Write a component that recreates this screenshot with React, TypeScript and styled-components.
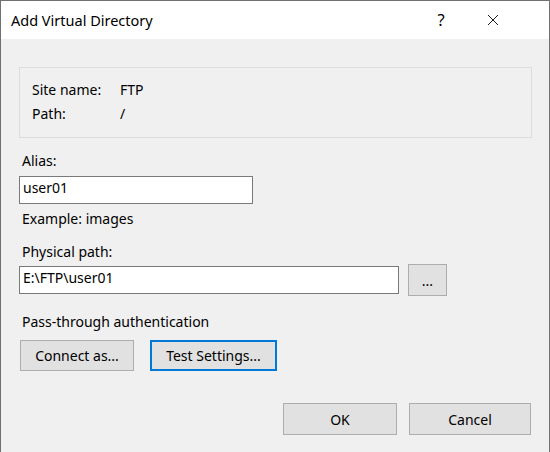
import React from 'react';
import styled, { createGlobalStyle } from 'styled-components';

const GlobalStyle = createGlobalStyle`
  html, body {
    margin: 0;
    padding: 0;
    background: #ffffff;
  }
  body {
    font-family: 'Noto Sans', 'Open Sans', sans-serif;
    font-size: 14px;
    color: #000000;
  }
`;

const Window = styled.div`
  box-sizing: border-box;
  width: 550px;
  height: 452px;
  border: 1px solid #707070;
  border-bottom: none;
  display: flex;
  flex-direction: column;
  background-color: #f0f0f0;
  overflow: hidden;
`;

const TitleBar = styled.div`
  height: 38px;
  flex-shrink: 0;
  background-color: #ffffff;
  display: flex;
  align-items: center;
  padding-left: 10px;
  padding-right: 30px;
`;

const Title = styled.span`
  flex: 1;
  font-size: 14.5px;
  line-height: 38px;
  color: #000000;
`;

const TitleButton = styled.div`
  width: 52px;
  height: 38px;
  display: flex;
  align-items: center;
  justify-content: center;
  font-size: 16.5px;
  padding-bottom: 1px;
  box-sizing: border-box;
  color: #000000;
`;

const Body = styled.div`
  flex: 1;
  display: flex;
  flex-direction: column;
  padding: 28px 17px 0 18px;
`;

const GroupBox = styled.div`
  box-sizing: border-box;
  height: 71px;
  border: 1px solid #dcdcdc;
  padding: 10px 12px 11px;
  display: grid;
  grid-template-columns: 88px 1fr;
  grid-auto-rows: 24px;
  line-height: 24px;
`;

interface LabelProps {
  mt: number;
}

const Label = styled.div<LabelProps>`
  margin-top: ${(props) => props.mt}px;
  padding-left: 3px;
  line-height: 20px;
  height: 20px;
`;

interface InputProps {
  w: number;
}

const TextBox = styled.input<InputProps>`
  box-sizing: border-box;
  width: ${(props) => props.w}px;
  height: 28px;
  margin: 0;
  border: 1px solid #7a7a7a;
  background-color: #ffffff;
  padding: 0 3px 5px;
  font-family: inherit;
  font-size: 14px;
  color: #000000;
  outline: none;
`;

const Row = styled.div<LabelProps>`
  display: flex;
  align-items: center;
  margin-top: ${(props) => props.mt}px;
`;

interface ButtonProps {
  w: number;
  h: number;
  focused?: boolean;
}

const Button = styled.div<ButtonProps>`
  box-sizing: border-box;
  width: ${(props) => props.w}px;
  height: ${(props) => props.h}px;
  background-color: #e1e1e1;
  border: ${(props) => (props.focused ? '2px solid #0078d7' : '1px solid #adadad')};
  display: flex;
  align-items: center;
  justify-content: center;
  font-size: 14px;
  color: #000000;
`;

const BottomRow = styled.div`
  display: flex;
  justify-content: flex-end;
  gap: 12px;
  margin-top: 32px;
  padding-right: 1px;
`;

function CloseIcon() {
  return (
    <svg width="12" height="12" viewBox="0 0 12 12">
      <path d="M1 1L11 11M11 1L1 11" stroke="#000000" strokeWidth={0.9} fill="none" />
    </svg>
  );
}

function App() {
  return (
    <>
      <GlobalStyle />
      <Window>
        <TitleBar>
          <Title>Add Virtual Directory</Title>
          <TitleButton>?</TitleButton>
          <TitleButton>
            <CloseIcon />
          </TitleButton>
        </TitleBar>
        <Body>
          <GroupBox>
            <span>Site name:</span>
            <span>FTP</span>
            <span>Path:</span>
            <span>/</span>
          </GroupBox>

          <Label mt={13}>Alias:</Label>
          <Row mt={5}>
            <TextBox w={234} value="user01" readOnly />
          </Row>
          <Label mt={5}>Example: images</Label>

          <Label mt={13}>Physical path:</Label>
          <Row mt={2} style={{ gap: 9 }}>
            <TextBox w={380} value={'E:\\FTP\\user01'} readOnly />
            <Button w={39} h={32}>...</Button>
          </Row>

          <Label mt={16}>Pass-through authentication</Label>
          <Row mt={8} style={{ gap: 16, paddingLeft: 1 }}>
            <Button w={114} h={31}>Connect as...</Button>
            <Button w={127} h={31} focused>Test Settings...</Button>
          </Row>

          <BottomRow>
            <Button w={114} h={32}>OK</Button>
            <Button w={122} h={32}>Cancel</Button>
          </BottomRow>
        </Body>
      </Window>
    </>
  );
}

export default App;
